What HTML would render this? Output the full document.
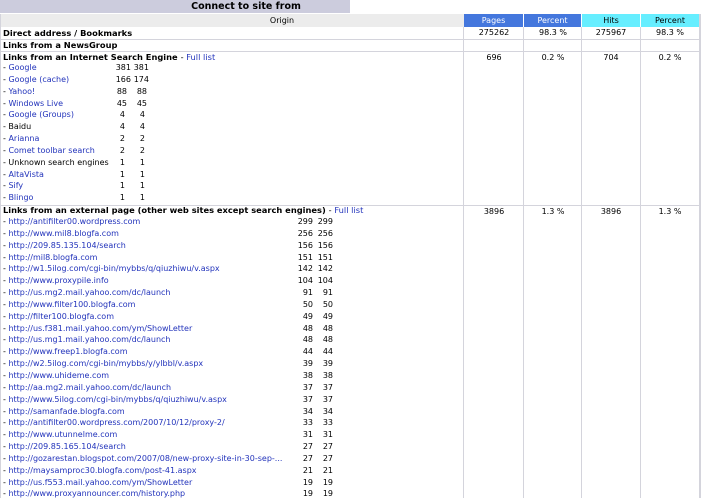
<!DOCTYPE html>
<html><head><meta charset="utf-8"><style>
html,body{margin:0;width:702px;height:498px;overflow:hidden}
body{background:#fff;font-family:"DejaVu Sans","Liberation Sans",sans-serif;font-size:8px;color:#000;position:relative}
.a{position:absolute}
.b{font-weight:bold;font-size:8.3px}
a,.l{color:#2233bb;text-decoration:none}
.vl{position:absolute;top:14px;width:1px;height:484px;background:#d4d4dc}
.hl{position:absolute;left:0;width:700px;height:1px;background:#d4d4dc}
.rows div{height:11.85px;line-height:11.85px;white-space:nowrap;position:relative}
.rows span{position:absolute;text-align:right}
.c{position:absolute;text-align:center;width:58px;line-height:12px}
</style></head><body>
<div class="a b" style="left:0;top:0;width:350px;height:13px;background:#ccccdd;text-align:center;line-height:13px;font-size:9.5px;padding-left:142px;box-sizing:border-box">Connect to site from</div>
<div class="a" style="left:0;top:14px;width:464px;height:13px;background:#ececec;text-align:center;line-height:13px;padding-left:100px;box-sizing:border-box">Origin</div>
<div class="a" style="left:464px;top:14px;width:59px;height:13px;background:#4477dd;text-align:center;line-height:13px;color:#fff">Pages</div>
<div class="a" style="left:524px;top:14px;width:57px;height:13px;background:#4477dd;text-align:center;line-height:13px;color:#fff">Percent</div>
<div class="a" style="left:582px;top:14px;width:58px;height:13px;background:#66eeff;text-align:center;line-height:13px">Hits</div>
<div class="a" style="left:641px;top:14px;width:58px;height:13px;background:#66eeff;text-align:center;line-height:13px">Percent</div>
<div class="vl" style="left:0"></div>
<div class="vl" style="left:463px;top:27px"></div>
<div class="vl" style="left:523px;top:27px"></div>
<div class="vl" style="left:581px;top:27px"></div>
<div class="vl" style="left:640px;top:27px"></div>
<div class="vl" style="left:699px;width:2px"></div>
<div class="hl" style="top:39px"></div>
<div class="hl" style="top:51px"></div>
<div class="hl" style="top:205px"></div>
<div class="a b" style="left:3px;top:27px;line-height:12px">Direct address / Bookmarks</div>
<div class="a b" style="left:3px;top:40px;line-height:11px">Links from a NewsGroup</div>
<div class="a b" style="left:3px;top:52px;line-height:11px">Links from an Internet Search Engine <span style="font-weight:normal">- <a>Full list</a></span></div>
<div class="a b" style="left:3px;top:205px;line-height:11px">Links from an external page (other web sites except search engines) <span style="font-weight:normal">- <a>Full list</a></span></div>
<div class="c" style="left:465px;top:27px">275262</div><div class="c" style="left:524px;top:27px">98.3 %</div><div class="c" style="left:582px;top:27px">275967</div><div class="c" style="left:641px;top:27px">98.3 %</div>
<div class="c" style="left:465px;top:52px">696</div><div class="c" style="left:524px;top:52px">0.2 %</div><div class="c" style="left:582px;top:52px">704</div><div class="c" style="left:641px;top:52px">0.2 %</div>
<div class="c" style="left:465px;top:206px">3896</div><div class="c" style="left:524px;top:206px">1.3 %</div><div class="c" style="left:582px;top:206px">3896</div><div class="c" style="left:641px;top:206px">1.3 %</div>
<div class="a rows" style="left:3px;top:62px;width:200px">
<div>- <a>Google</a><span style="left:100px;width:28px">381</span><span style="left:128px;width:18px">381</span></div>
<div>- <a>Google (cache)</a><span style="left:100px;width:28px">166</span><span style="left:128px;width:18px">174</span></div>
<div>- <a>Yahoo!</a><span style="left:100px;width:24px">88</span><span style="left:128px;width:16px">88</span></div>
<div>- <a>Windows Live</a><span style="left:100px;width:24px">45</span><span style="left:128px;width:16px">45</span></div>
<div>- <a>Google (Groups)</a><span style="left:100px;width:22px">4</span><span style="left:128px;width:14px">4</span></div>
<div>- Baidu<span style="left:100px;width:22px">4</span><span style="left:128px;width:14px">4</span></div>
<div>- <a>Arianna</a><span style="left:100px;width:22px">2</span><span style="left:128px;width:14px">2</span></div>
<div>- <a>Comet toolbar search</a><span style="left:100px;width:22px">2</span><span style="left:128px;width:14px">2</span></div>
<div>- Unknown search engines<span style="left:100px;width:22px">1</span><span style="left:128px;width:14px">1</span></div>
<div>- <a>AltaVista</a><span style="left:100px;width:22px">1</span><span style="left:128px;width:14px">1</span></div>
<div>- <a>Sify</a><span style="left:100px;width:22px">1</span><span style="left:128px;width:14px">1</span></div>
<div>- <a>Blingo</a><span style="left:100px;width:22px">1</span><span style="left:128px;width:14px">1</span></div>
</div>
<div class="a rows" style="left:3px;top:216px;width:340px">
<div>- <a>http://antifilter00.wordpress.com</a><span style="left:290px;width:20px">299</span><span style="left:310px;width:20px">299</span></div>
<div>- <a>http://www.mil8.blogfa.com</a><span style="left:290px;width:20px">256</span><span style="left:310px;width:20px">256</span></div>
<div>- <a>http://209.85.135.104/search</a><span style="left:290px;width:20px">156</span><span style="left:310px;width:20px">156</span></div>
<div>- <a>http://mil8.blogfa.com</a><span style="left:290px;width:20px">151</span><span style="left:310px;width:20px">151</span></div>
<div>- <a>http://w1.5ilog.com/cgi-bin/mybbs/q/qiuzhiwu/v.aspx</a><span style="left:290px;width:20px">142</span><span style="left:310px;width:20px">142</span></div>
<div>- <a>http://www.proxypile.info</a><span style="left:290px;width:20px">104</span><span style="left:310px;width:20px">104</span></div>
<div>- <a>http://us.mg2.mail.yahoo.com/dc/launch</a><span style="left:290px;width:20px">91</span><span style="left:310px;width:20px">91</span></div>
<div>- <a>http://www.filter100.blogfa.com</a><span style="left:290px;width:20px">50</span><span style="left:310px;width:20px">50</span></div>
<div>- <a>http://filter100.blogfa.com</a><span style="left:290px;width:20px">49</span><span style="left:310px;width:20px">49</span></div>
<div>- <a>http://us.f381.mail.yahoo.com/ym/ShowLetter</a><span style="left:290px;width:20px">48</span><span style="left:310px;width:20px">48</span></div>
<div>- <a>http://us.mg1.mail.yahoo.com/dc/launch</a><span style="left:290px;width:20px">48</span><span style="left:310px;width:20px">48</span></div>
<div>- <a>http://www.freep1.blogfa.com</a><span style="left:290px;width:20px">44</span><span style="left:310px;width:20px">44</span></div>
<div>- <a>http://w2.5ilog.com/cgi-bin/mybbs/y/ylbbl/v.aspx</a><span style="left:290px;width:20px">39</span><span style="left:310px;width:20px">39</span></div>
<div>- <a>http://www.uhideme.com</a><span style="left:290px;width:20px">38</span><span style="left:310px;width:20px">38</span></div>
<div>- <a>http://aa.mg2.mail.yahoo.com/dc/launch</a><span style="left:290px;width:20px">37</span><span style="left:310px;width:20px">37</span></div>
<div>- <a>http://www.5ilog.com/cgi-bin/mybbs/q/qiuzhiwu/v.aspx</a><span style="left:290px;width:20px">37</span><span style="left:310px;width:20px">37</span></div>
<div>- <a>http://samanfade.blogfa.com</a><span style="left:290px;width:20px">34</span><span style="left:310px;width:20px">34</span></div>
<div>- <a>http://antifilter00.wordpress.com/2007/10/12/proxy-2/</a><span style="left:290px;width:20px">33</span><span style="left:310px;width:20px">33</span></div>
<div>- <a>http://www.utunnelme.com</a><span style="left:290px;width:20px">31</span><span style="left:310px;width:20px">31</span></div>
<div>- <a>http://209.85.165.104/search</a><span style="left:290px;width:20px">27</span><span style="left:310px;width:20px">27</span></div>
<div>- <a>http://gozarestan.blogspot.com/2007/08/new-proxy-site-in-30-sep-...</a><span style="left:290px;width:20px;background:#fff">27</span><span style="left:310px;width:20px">27</span></div>
<div>- <a>http://maysamproc30.blogfa.com/post-41.aspx</a><span style="left:290px;width:20px">21</span><span style="left:310px;width:20px">21</span></div>
<div>- <a>http://us.f553.mail.yahoo.com/ym/ShowLetter</a><span style="left:290px;width:20px">19</span><span style="left:310px;width:20px">19</span></div>
<div>- <a>http://www.proxyannouncer.com/history.php</a><span style="left:290px;width:20px">19</span><span style="left:310px;width:20px">19</span></div>
</div>
</body></html>
